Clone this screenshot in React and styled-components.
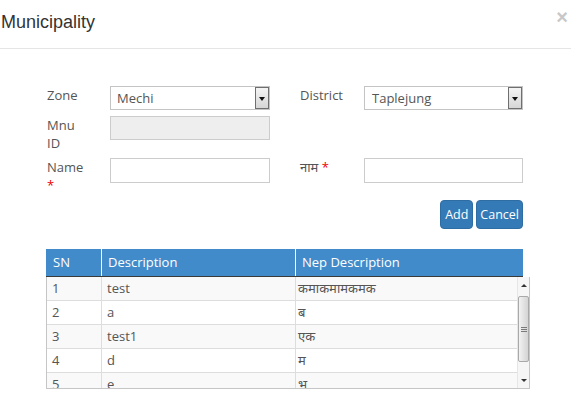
import React from "react";
import styled, { createGlobalStyle } from "styled-components";

const GlobalStyle = createGlobalStyle`
  html, body { margin: 0; padding: 0; background: #fff; }
  body { font-family: "Open Sans", "Noto Sans", sans-serif; font-size: 13px; color: #555; }
  * { box-sizing: border-box; }
`;

const Modal = styled.div`
  width: 571px;
  height: 402px;
  overflow: hidden;
  background: #fff;
`;

const Header = styled.div`
  height: 49px;
  border-bottom: 1px solid #e5e5e5;
  display: flex;
  justify-content: space-between;
  align-items: flex-start;
  padding: 12px 3px 0 1px;
`;

const Title = styled.h4`
  margin: 0;
  font-family: "Liberation Sans", Arial, sans-serif;
  font-weight: normal;
  font-size: 18px;
  line-height: 20px;
  color: #333;
`;

const Close = styled.span`
  font-family: "Liberation Sans", Arial, sans-serif;
  font-weight: bold;
  font-size: 20px;
  line-height: 14px;
  color: #c8c8c8;
  margin-top: -2px;
`;

const Content = styled.div`
  padding: 37px 0 0 46px;
`;

const FormGrid = styled.div`
  display: grid;
  grid-template-columns: 63px 160px 30px 64px 159px;
  row-gap: 6px;
  align-items: start;
  margin-left: 1px;
`;

const Label = styled.label`
  font-size: 13px;
  line-height: 18px;
  color: #555;
  grid-column: ${(p) => p.col};
`;

const Star = styled.span`
  color: #e00;
`;

const SelectBox = styled.div`
  grid-column: ${(p) => p.col};
  height: 24px;
  border: 1px solid #c4c4c4;
  background: #fff;
  display: flex;
  align-items: stretch;
  color: #555;
`;

const SelectText = styled.span`
  flex: 1;
  padding-left: ${(p) => p.pad}px;
  line-height: 22px;
  font-size: 13px;
`;

const ArrowBtn = styled.span`
  width: 14px;
  border: 1px solid #6f6f6f;
  background: linear-gradient(#f4f4f4, #d6d6d6);
  display: flex;
  align-items: center;
  justify-content: center;
  &::after {
    content: "";
    border-left: 3.5px solid transparent;
    border-right: 3.5px solid transparent;
    border-top: 4px solid #111;
    margin-top: 1px;
  }
`;

const Input = styled.input`
  grid-column: ${(p) => p.col};
  height: ${(p) => p.h}px;
  width: 100%;
  border: 1px solid #ccc;
  background: ${(p) => (p.disabled ? "#eee" : "#fff")};
  font: inherit;
  padding: 0 6px;
  outline: none;
`;

const ButtonRow = styled.div`
  display: flex;
  justify-content: flex-end;
  gap: 3px;
  width: 477px;
  margin-top: 6px;
`;

const Button = styled.button`
  height: 29px;
  padding: 0 ${(p) => p.pad}px;
  background: #337ab7;
  border: 1px solid #2e6da4;
  border-radius: 4px;
  color: #fff;
  font-family: "Open Sans", sans-serif;
  font-size: 12.5px;
  line-height: 27px;
`;

const TableWrap = styled.div`
  margin-top: 20px;
  width: 484px;
`;

const HeadRow = styled.div`
  display: grid;
  grid-template-columns: 55px 194px 228px;
  width: 477px;
  height: 28px;
  background: #428bca;
  border-bottom: 1px solid #3a3a3a;
`;

const HeadCell = styled.div`
  color: #fff;
  font-size: 13px;
  line-height: 27px;
  padding-left: ${(p) => (p.first ? 7 : 6)}px;
  border-left: ${(p) => (p.first ? "none" : "1px solid #fff")};
`;

const BodyBox = styled.div`
  display: flex;
  height: 112px;
  border: 1px solid #c6c6c6;
  border-top: none;
`;

const Rows = styled.div`
  flex: 1;
  overflow: hidden;
`;

const Row = styled.div`
  display: grid;
  grid-template-columns: 55px 194px 1fr;
  height: 24px;
  background: ${(p) => (p.odd ? "#f9f9f9" : "#fff")};
  border-bottom: 1px solid #ddd;
`;

const Cell = styled.div`
  padding-left: ${(p) => p.pad}px;
  line-height: 23px;
  font-size: 13px;
  color: #555;
  border-right: ${(p) => (p.last ? "none" : "1px solid #ddd")};
  white-space: nowrap;
`;

const ScrollBar = styled.div`
  width: 12px;
  display: flex;
  flex-direction: column;
  background: #f6f6f6;
  border-left: 1px solid #e6e6e6;
`;

const ArrowBox = styled.div`
  height: 16px;
  display: flex;
  align-items: center;
  justify-content: center;
  &::after {
    content: "";
    border-left: 3px solid transparent;
    border-right: 3px solid transparent;
    ${(p) =>
      p.up
        ? "border-bottom: 3px solid #333;"
        : "border-top: 3px solid #333;"}
  }
`;

const Track = styled.div`
  flex: 1;
  padding-top: 3px;
`;

const Thumb = styled.div`
  height: 66px;
  border: 1px solid #a9a9a9;
  border-radius: 2px;
  background: linear-gradient(to right, #f2f2f2, #d4d4d4);
  display: flex;
  flex-direction: column;
  align-items: center;
  justify-content: center;
  gap: 1px;
`;

const Grip = styled.span`
  width: 6px;
  height: 1px;
  background: #7a7a7a;
`;

const data = [
  ["1", "test", "कमाकमामकमक"],
  ["2", "a", "ब"],
  ["3", "test1", "एक"],
  ["4", "d", "म"],
  ["5", "e", "भ"],
];

export default function App() {
  return (
    <Modal>
      <GlobalStyle />
      <Header>
        <Title>Municipality</Title>
        <Close>×</Close>
      </Header>
      <Content>
        <FormGrid>
          <Label col="1">Zone</Label>
          <SelectBox col="2">
            <SelectText pad={6}>Mechi</SelectText>
            <ArrowBtn />
          </SelectBox>
          <Label col="4">District</Label>
          <SelectBox col="5">
            <SelectText pad={7}>Taplejung</SelectText>
            <ArrowBtn />
          </SelectBox>

          <Label col="1">
            Mnu
            <br />
            ID
          </Label>
          <Input col="2" h={24} disabled />

          <Label col="1">
            Name
            <br />
            <Star>*</Star>
          </Label>
          <Input col="2" h={25} />
          <Label col="4">
            नाम <Star>*</Star>
          </Label>
          <Input col="5" h={25} />
        </FormGrid>
        <ButtonRow>
          <Button pad={4}>Add</Button>
          <Button pad={3}>Cancel</Button>
        </ButtonRow>
        <TableWrap>
          <HeadRow>
            <HeadCell first>SN</HeadCell>
            <HeadCell>Description</HeadCell>
            <HeadCell>Nep Description</HeadCell>
          </HeadRow>
          <BodyBox>
            <Rows>
              {data.map((r, i) => (
                <Row key={r[0]} odd={i % 2 === 0}>
                  <Cell pad={5}>{r[0]}</Cell>
                  <Cell pad={5}>{r[1]}</Cell>
                  <Cell pad={2} last>
                    {r[2]}
                  </Cell>
                </Row>
              ))}
            </Rows>
            <ScrollBar>
              <ArrowBox up />
              <Track>
                <Thumb>
                  <Grip />
                  <Grip />
                  <Grip />
                </Thumb>
              </Track>
              <ArrowBox />
            </ScrollBar>
          </BodyBox>
        </TableWrap>
      </Content>
    </Modal>
  );
}
